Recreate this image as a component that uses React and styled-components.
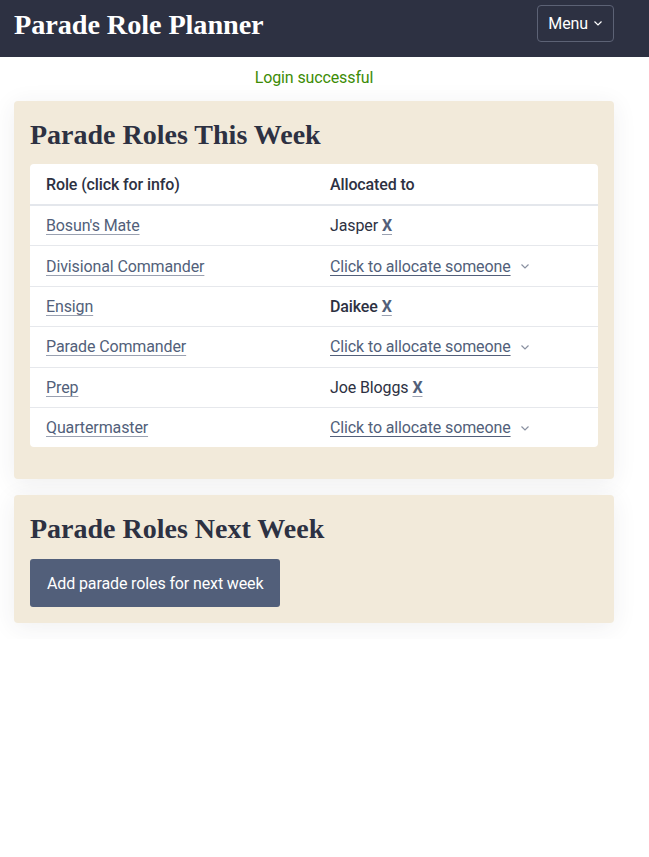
import React from 'react'
import styled, { createGlobalStyle } from 'styled-components'

const GlobalStyle = createGlobalStyle`
  body {
    margin: 0;
    font-family: Roboto, "Liberation Sans", sans-serif;
    font-size: 16px;
    letter-spacing: -0.12px;
    color: #2d3142;
    background: #fff;
  }
`

const Header = styled.header`
  background: #2d3142;
  height: 57px;
  padding: 0 14px;
`

const HeaderInner = styled.div`
  max-width: 600px;
  height: 100%;
  display: flex;
  align-items: center;
  justify-content: space-between;
`

const Brand = styled.h1`
  margin: 0;
  color: #fff;
  font-family: "Liberation Serif", "DejaVu Serif", serif;
  font-weight: bold;
  font-size: 28.3px;
  padding-bottom: 8px;
  letter-spacing: -0.1px;
`

const MenuButton = styled.button`
  display: flex;
  align-items: center;
  gap: 5px;
  height: 37px;
  margin-bottom: 11px;
  padding: 0 10px;
  background: transparent;
  color: #fff;
  border: 1px solid #5c6275;
  border-radius: 4px;
  font-family: Roboto, sans-serif;
  font-size: 16px;
  letter-spacing: -0.12px;
`

const Main = styled.main`
  max-width: 600px;
  padding: 0 14px;
`

const Flash = styled.p`
  margin: 11px 0 14px;
  text-align: center;
  color: #3d8c06;
  font-size: 16px;
`

const Card = styled.section`
  background: #f2eada;
  border-radius: 4px;
  padding: 16px 16px ${p => p.$bottom || 16}px;
  box-shadow: 0 4px 24px rgba(45, 49, 66, 0.08);
  margin-bottom: 16px;
`

const CardTitle = styled.h2`
  margin: 0 0 ${p => p.$gap || 12}px;
  font-family: "Liberation Serif", "DejaVu Serif", serif;
  font-weight: bold;
  font-size: 28px;
  line-height: 35px;
  letter-spacing: 0;
  color: #2d3142;
`

const Table = styled.table`
  width: 100%;
  border-collapse: collapse;
  background: #fff;
  border-radius: 4px;
  overflow: hidden;
`

const Th = styled.th`
  text-align: left;
  font-weight: 500;
  height: 40px;
  padding: 0 16px;
  border-bottom: 2px solid #e4e7ec;
  width: ${p => p.$w || 'auto'};
`

const Td = styled.td`
  height: 39.4px;
  padding: 0 16px;
  border-top: ${p => (p.$first ? 'none' : '1px solid #e6e8ec')};
  font-weight: ${p => (p.$bold ? 500 : 400)};
`

const RoleLink = styled.a`
  color: #525f7a;
  text-decoration: underline;
  text-decoration-color: #9aa1b1;
  text-underline-offset: 3px;
  cursor: pointer;
`

const Remove = styled.a`
  color: #525f7a;
  font-weight: 700;
  text-decoration: underline;
  text-decoration-color: #9aa1b1;
  text-underline-offset: 3px;
  margin-left: 4px;
`

const Allocate = styled.span`
  display: inline-flex;
  align-items: center;
  gap: 9px;
  color: #525f7a;
  span {
    text-decoration: underline;
    text-decoration-color: #525f7a;
    text-underline-offset: 3px;
  }
`

const AddButton = styled.button`
  display: block;
  background: #525f7a;
  color: #fff;
  border: none;
  border-radius: 3px;
  height: 48px;
  padding: 0 17px;
  font-family: Roboto, sans-serif;
  font-size: 16px;
  letter-spacing: -0.12px;
`

const Chevron = ({ color = '#fff', size = 10 }) => (
  <svg width={size} height={size} viewBox="0 0 10 10" fill="none">
    <path d="M1.5 3.5 L5 7 L8.5 3.5" stroke={color} strokeWidth="1.2" />
  </svg>
)

const roles = [
  { role: "Bosun's Mate", who: 'Jasper' },
  { role: 'Divisional Commander' },
  { role: 'Ensign', who: 'Daikee', bold: true },
  { role: 'Parade Commander' },
  { role: 'Prep', who: 'Joe Bloggs' },
  { role: 'Quartermaster' },
]

export default function App() {
  return (
    <>
      <GlobalStyle />
      <Header>
        <HeaderInner>
          <Brand>Parade Role Planner</Brand>
          <MenuButton>
            Menu <Chevron />
          </MenuButton>
        </HeaderInner>
      </Header>
      <Main>
        <Flash>Login successful</Flash>
        <Card $bottom={32}>
          <CardTitle>Parade Roles This Week</CardTitle>
          <Table>
            <thead>
              <tr>
                <Th $w="252px">Role (click for info)</Th>
                <Th>Allocated to</Th>
              </tr>
            </thead>
            <tbody>
              {roles.map((r, i) => (
                <tr key={r.role}>
                  <Td $first={i === 0}>
                    <RoleLink>{r.role}</RoleLink>
                  </Td>
                  <Td $first={i === 0} $bold={r.bold}>
                    {r.who ? (
                      <>
                        {r.who}
                        <Remove>X</Remove>
                      </>
                    ) : (
                      <Allocate>
                        <span>Click to allocate someone</span>
                        <Chevron color="#8a91a1" />
                      </Allocate>
                    )}
                  </Td>
                </tr>
              ))}
            </tbody>
          </Table>
        </Card>
        <Card>
          <CardTitle $gap={13}>Parade Roles Next Week</CardTitle>
          <AddButton>Add parade roles for next week</AddButton>
        </Card>
      </Main>
    </>
  )
}
